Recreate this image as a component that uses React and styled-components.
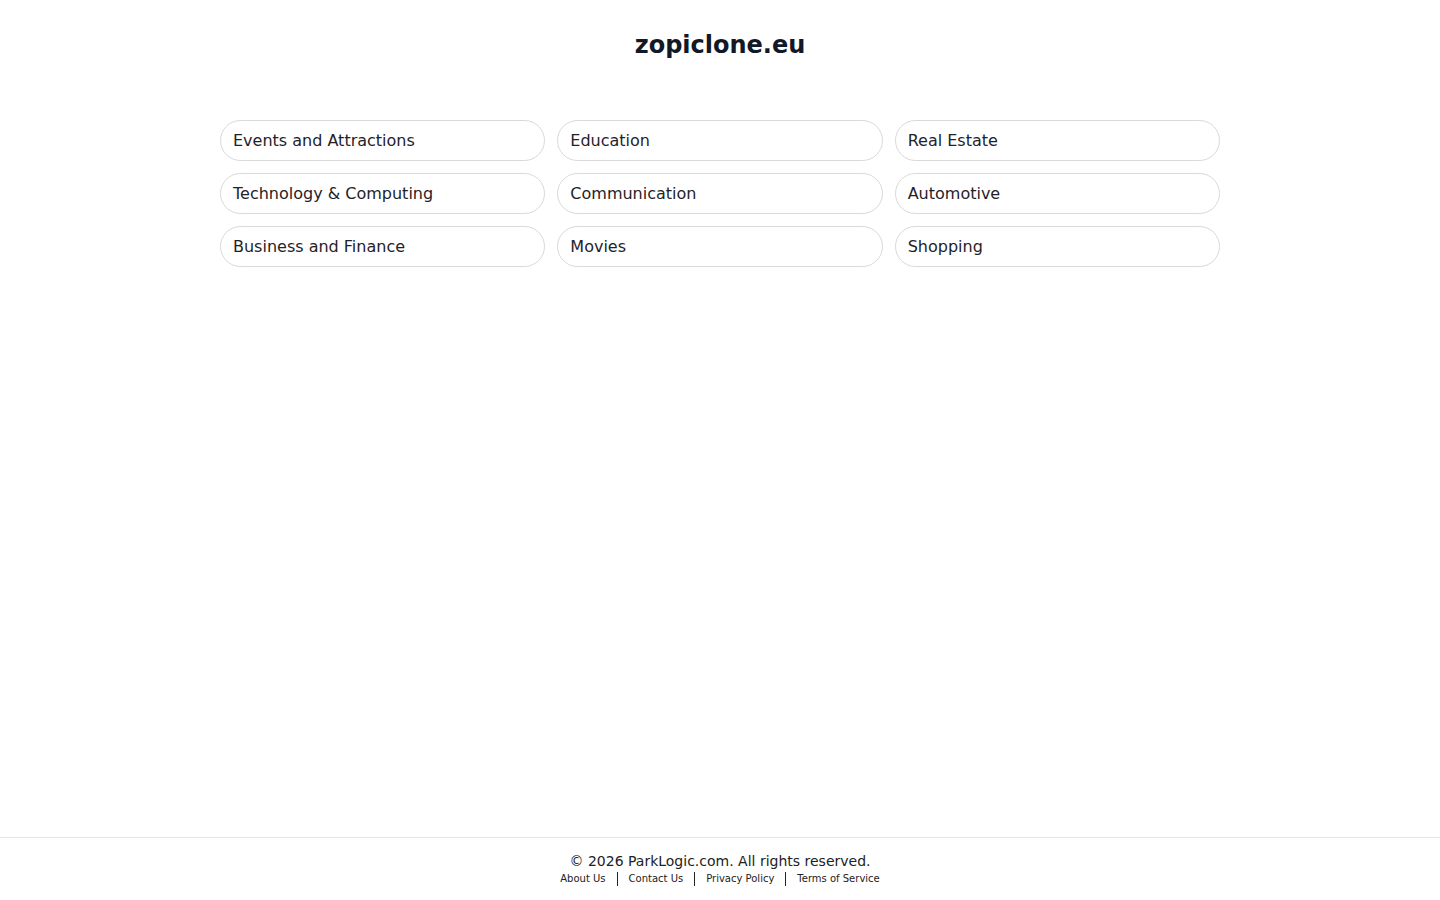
import styled, { createGlobalStyle } from "styled-components"

const Global = createGlobalStyle`
  html, body {
    margin: 0;
    padding: 0;
    background: #ffffff;
    font-family: "DejaVu Sans", sans-serif;
  }
`

const Page = styled.div`
  min-height: 100vh;
  display: flex;
  flex-direction: column;
`

const Main = styled.main`
  flex: 1;
  display: flex;
  flex-direction: column;
  align-items: center;
  padding-top: 29px;
`

const Title = styled.h1`
  margin: 0;
  font-size: 24px;
  line-height: 32px;
  font-weight: 700;
  color: #111827;
`

const Grid = styled.div`
  width: 1000px;
  margin-top: 59px;
  display: grid;
  grid-template-columns: repeat(3, 1fr);
  gap: 12px;
`

const Pill = styled.a`
  display: flex;
  align-items: center;
  height: 41px;
  box-sizing: border-box;
  padding: 0 12px;
  border: 1px solid #d9d9d9;
  border-radius: 999px;
  font-size: 16px;
  color: #1f2328;
  text-decoration: none;
  cursor: pointer;
`

const Footer = styled.footer`
  border-top: 1px solid #e5e7eb;
  height: 63px;
  display: flex;
  flex-direction: column;
  align-items: center;
  padding-top: 14px;
  box-sizing: border-box;
`

const Copy = styled.div`
  font-size: 14px;
  line-height: 18px;
  color: #222;
`

const Links = styled.div`
  display: flex;
  align-items: center;
  margin-top: 2px;
`

const FooterLink = styled.a`
  font-size: 10px;
  line-height: 14px;
  color: #222;
  text-decoration: none;
`

const Sep = styled.span`
  width: 1px;
  height: 14px;
  background: #222;
  margin: 0 11px;
`

const categories = [
  "Events and Attractions",
  "Education",
  "Real Estate",
  "Technology & Computing",
  "Communication",
  "Automotive",
  "Business and Finance",
  "Movies",
  "Shopping",
]

const links = ["About Us", "Contact Us", "Privacy Policy", "Terms of Service"]

const App = () => {
  return (
    <Page>
      <Global />
      <Main>
        <Title>zopiclone.eu</Title>
        <Grid>
          {categories.map((c) => (
            <Pill key={c}>{c}</Pill>
          ))}
        </Grid>
      </Main>
      <Footer>
        <Copy>© 2026 ParkLogic.com. All rights reserved.</Copy>
        <Links>
          {links.map((l, i) => (
            <span key={l} style={{ display: "contents" }}>
              {i > 0 && <Sep />}
              <FooterLink>{l}</FooterLink>
            </span>
          ))}
        </Links>
      </Footer>
    </Page>
  )
}

export default App
